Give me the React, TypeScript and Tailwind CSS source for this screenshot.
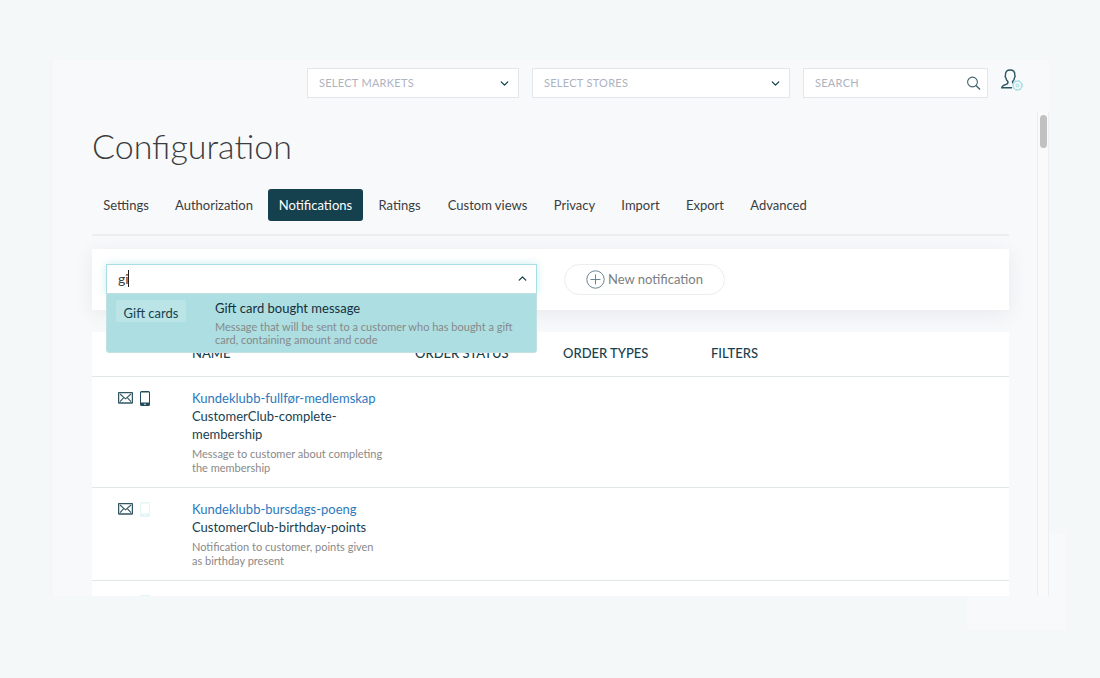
import { ChevronDown, ChevronUp } from "lucide-react";

const tabs = [
  { name: "Settings", width: "w-[68px]" },
  { name: "Authorization", width: "w-[100px]" },
  { name: "Notifications", width: "w-[95px]" },
  { name: "Ratings", width: "w-[65px]" },
  { name: "Custom views", width: "w-[103px]" },
  { name: "Privacy", width: "w-[63px]" },
  { name: "Import", width: "w-[61px]" },
  { name: "Export", width: "w-[60px]" },
  { name: "Advanced", width: "w-[79px]" },
];

const notifications = [
  {
    title: "Kundeklubb-fullfør-medlemskap",
    code: "CustomerClub-complete-membership",
    text: "Message to customer about completing the membership",
    sms: true,
  },
  {
    title: "Kundeklubb-bursdags-poeng",
    code: "CustomerClub-birthday-points",
    text: "Notification to customer, points given as birthday present",
    sms: false,
  },
];

function MailIcon() {
  return (
    <svg width="15" height="12" viewBox="0 0 15 12" fill="none" stroke="#335663" aria-hidden="true">
      <rect x="0.6" y="0.6" width="13.8" height="10.4" rx="0.5" strokeWidth="1.3" />
      <path d="M2 2 L7.5 6.8 L13 2 M2 9.7 L5.5 5.8 M13 9.7 L9.5 5.8" strokeWidth="1.1" />
    </svg>
  );
}

function PhoneIcon({ active }: { active: boolean }) {
  return (
    <svg width="10" height="15" viewBox="0 0 10 15" className={active ? "text-[#244c59]" : "text-[#e3f5f5]"} aria-hidden="true">
      <path
        fill="currentColor"
        fillRule="evenodd"
        d="M1.5 0h7A1.5 1.5 0 0 1 10 1.5v12A1.5 1.5 0 0 1 8.5 15h-7A1.5 1.5 0 0 1 0 13.500v-12A1.5 1.5 0 0 1 1.5 0zM1 1.500v10h8v-10zM5 12.400a.8.8 0 1 0 0 1.600.8.8 0 0 0 0-1.600z"
      />
    </svg>
  );
}

function UserGearIcon() {
  return (
    <svg width="22" height="24" viewBox="0 0 22 24" fill="none" aria-hidden="true">
      <path
        d="M12 14.200c-.5-.4-.6-1.100-.4-1.700 1.300-1.100 1.800-2.300 1.900-3.800.9-.8.8-1.800.3-2.500C14 2.600 12.400 1 9.200 1S4.300 2.600 4.500 6.100c-.6.8-.5 1.900.3 2.600.2 1.500.8 2.800 2.100 3.900.3 1.500-.2 2.300-1.700 2.800C2.500 16.300.9 16.800.8 18.700H11"
        stroke="#2b5361"
        strokeWidth="1.400"
      />
      <circle cx="16.500" cy="16.500" r="4.300" stroke="#a5dfe4" strokeWidth="1.300" />
      <circle cx="16.500" cy="16.500" r="5" stroke="#a5dfe4" strokeWidth="1" strokeDasharray="1.963 1.963" />
      <circle cx="16.500" cy="16.500" r="1.500" stroke="#a5dfe4" strokeWidth="1.100" />
    </svg>
  );
}

function FilterSelect({ label, width }: { label: string; width: string }) {
  return (
    <div className={`relative h-[30px] ${width}`}>
      <select
        aria-label={label}
        className="h-full w-full appearance-none border border-[#e3e6ea] bg-white pl-[11px] pr-8 text-[11px] tracking-wide text-[#aeb3bf] outline-none"
      >
        <option>{label}</option>
      </select>
      <ChevronDown className="pointer-events-none absolute right-2 top-[9px] size-[13px] text-[#17414e]" strokeWidth={2.5} />
    </div>
  );
}

export default function App() {
  return (
    <div className="relative flex h-screen flex-col overflow-hidden bg-[#f4f8f9] px-[51px] pb-[82px] pt-[60px] font-['Lato',sans-serif] text-[13px] text-[#3a3d40]">
      <div className="absolute bottom-[49px] right-[34px] h-24 w-[99px] bg-[#f8f9fb]" />
      <div className="relative flex min-h-0 flex-1 flex-col overflow-hidden border-l border-[#f1f3f5] bg-[#f8f9fb]">
        <header className="flex h-[52px] shrink-0 items-start justify-end gap-[13px] pr-[26px] pt-2">
          <FilterSelect label="SELECT MARKETS" width="w-[212px]" />
          <FilterSelect label="SELECT STORES" width="w-[258px]" />
          <div className="relative h-[30px] w-[185px]">
            <input
              aria-label="Search"
              type="search"
              placeholder="SEARCH"
              className="h-full w-full border border-[#e3e6ea] bg-white pb-0.5 pl-[11px] pr-8 text-[11px] tracking-wide outline-none placeholder:text-[#aeb3bf]"
            />
            <svg className="pointer-events-none absolute right-[7px] top-2" width="15" height="15" viewBox="0 0 15 15" fill="none" stroke="#40626e" strokeWidth="1.100" aria-hidden="true">
              <circle cx="6.500" cy="6" r="4.900" />
              <path d="M10 9.600 L14 13.500" strokeWidth="1.400" />
            </svg>
          </div>
          <button aria-label="Account settings" className="mt-px h-6 w-[22px]">
            <UserGearIcon />
          </button>
        </header>

        <div className="flex min-h-0 flex-1">
          <main className="min-w-0 flex-1 pl-10 pr-7 pt-3">
            <h1 className="text-[34px] font-light leading-[44px]">Configuration</h1>
            <nav className="mt-[21px] flex gap-1 border-b-2 border-[#eceef0] pb-[13px]">
              {tabs.map((tab) => (
                <button
                  key={tab.name}
                  className={`h-8 shrink-0 rounded-[3px] pt-0.5 text-center ${tab.width} ${
                    tab.name === "Notifications" ? "bg-[#15404d] text-white" : "text-[#3a3d40]"
                  }`}
                >
                  {tab.name}
                </button>
              ))}
            </nav>

            <section className="mt-[13px] flex h-[61px] items-start gap-[27px] bg-white pl-[14px] pt-[15px] shadow-[0_4px_20px_rgba(20,50,70,0.08)]">
              <div className="relative z-10 h-[30px] w-[431px]">
                <input
                  aria-label="Notification type"
                  type="text"
                  role="combobox"
                  aria-expanded="true"
                  aria-controls="type-options"
                  defaultValue="gi"
                  className="h-full w-full border border-[#a9dfe2] bg-white pb-0.5 pl-[11px] pr-8 text-[14px] text-[#3a3d40] shadow-[0_0_8px_rgba(150,220,225,0.5)] outline-none"
                />
                <span className="absolute left-[22px] top-1.5 h-[17px] w-px bg-[#222222]" />
                <ChevronUp className="pointer-events-none absolute right-2 top-2 size-[13px] text-[#17414e]" strokeWidth={2.5} />
                <ul
                  id="type-options"
                  role="listbox"
                  className="absolute left-0 top-[29px] h-[60px] w-full rounded-b-[3px] border border-[#c3dfe2] bg-[#addee1]"
                >
                  <li role="option" aria-selected="true" className="flex items-start pl-[9px] pt-[5px]">
                    <span className="mt-px h-[22px] w-[70px] rounded-[3px] bg-[#bbe4e6] text-center leading-[26px] text-[#17414e]">
                      Gift cards
                    </span>
                    <span className="ml-[29px] flex-1">
                      <span className="block leading-[18px] text-[#172f3d]">Gift card bought message</span>
                      <span className="mt-[3px] block text-[11px] leading-[13px] text-[#87898b]">
                        Message that will be sent to a customer who has bought a gift card, containing amount and code
                      </span>
                    </span>
                  </li>
                </ul>
              </div>
              <button className="flex h-[31px] w-[161px] items-center justify-center gap-[3px] rounded-full border border-[#eceded] text-[#7b7e80]">
                <svg width="19" height="19" viewBox="0 0 19 19" fill="none" stroke="#688490" aria-hidden="true">
                  <circle cx="9.500" cy="9.500" r="8.700" />
                  <path d="M9.500 4.500v10M4.500 9.500h10" />
                </svg>
                New notification
              </button>
            </section>

            <table className="mt-[22px] w-full table-fixed border-collapse bg-white text-left">
              <thead>
                <tr className="h-11 border-b border-[#e1e7e9] text-[#17414e]">
                  <td className="w-[100px]" />
                  <th className="w-[223px] font-medium">NAME</th>
                  <th className="w-[148px] font-medium">ORDER STATUS</th>
                  <th className="w-[148px] font-medium">ORDER TYPES</th>
                  <th className="font-medium">FILTERS</th>
                </tr>
              </thead>
              <tbody>
                {notifications.map((item) => (
                  <tr key={item.title} className="border-b border-[#e1e7e9] align-top">
                    <td className="pt-[14px]">
                      <div className="flex items-center gap-[7px] pl-[26px]">
                        <MailIcon />
                        <PhoneIcon active={item.sms} />
                      </div>
                    </td>
                    <td className="pb-3 pr-[30px] pt-3">
                      <a href="#notification" className="block leading-[18px] text-[#2b79bd]">
                        {item.title}
                      </a>
                      <p className="leading-[18px] text-[#17414e]">{item.code}</p>
                      <p className="mt-1 text-[11px] leading-[14px] text-[#898989]">{item.text}</p>
                    </td>
                    <td />
                    <td />
                    <td />
                  </tr>
                ))}
                <tr className="align-top">
                  <td className="pl-12 pt-[14px]">
                    <PhoneIcon active={false} />
                  </td>
                  <td colSpan={4} />
                </tr>
              </tbody>
            </table>
          </main>
          <div className="w-3 shrink-0 border-x border-[#eceeef] bg-[#fafafa] pt-[3px]">
            <div className="mx-auto h-[33px] w-[7px] rounded-full bg-[#c1c1c1]" />
          </div>
        </div>
      </div>
    </div>
  );
}
